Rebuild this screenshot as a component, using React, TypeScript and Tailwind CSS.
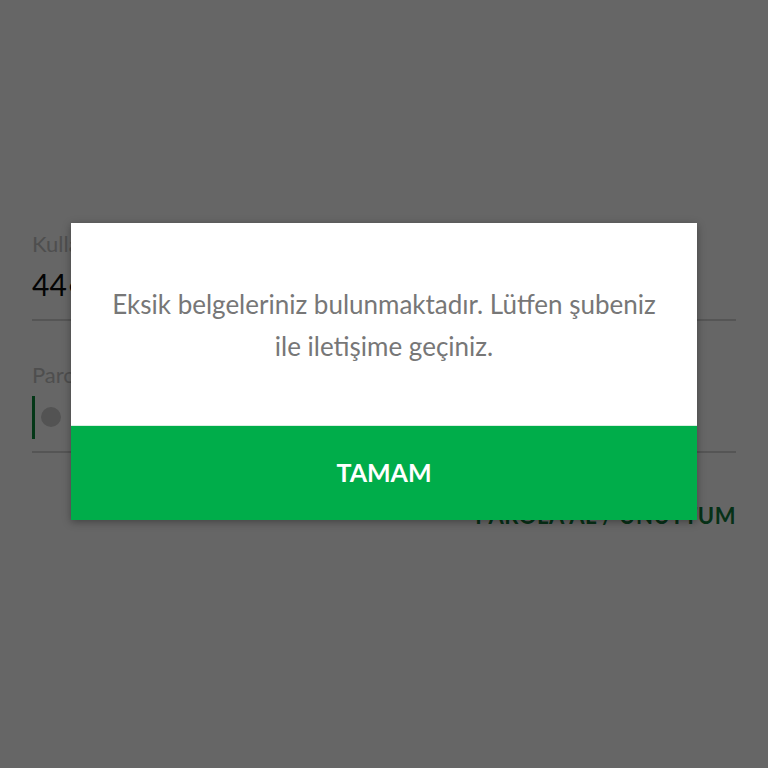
import React from 'react';

// Giriş ekranı + "eksik belge" uyarı penceresi

function LoginForm() {
  return (
    <div className="px-8 pt-[228px]">
      <div className="text-[22px] leading-[32px] text-[#c4c4c4]">Kullanıcı Adı</div>
      <div className="mt-[6px] text-[30px] leading-[36px] text-[#0a0a0a]">44•••••••••</div>
      <div className="mt-[17px] h-[2px] bg-[#d4d4d4]" />

      <div className="mt-[38px] text-[22px] leading-[32px] text-[#c4c4c4]">Parola</div>
      <div className="mt-[4px] flex h-[44px] items-center">
        <div className="h-[43px] w-[3px] bg-[#0a8a3a]" />
        <div className="ml-[6px] h-[20px] w-[20px] rounded-full bg-[#cfcfcf]" />
      </div>
      <div className="mt-[12px] h-[2px] bg-[#d4d4d4]" />

      <div className="mt-[46px] flex justify-end">
        <span className="text-[22px] font-bold tracking-wide text-[#0f7a3a]">PAROLA AL / UNUTTUM</span>
      </div>
    </div>
  );
}

function AlertDialog() {
  return (
    <div className="absolute inset-0 flex items-start justify-center bg-black/60 pt-[223px]">
      <div className="w-[626px] bg-white shadow-[0_2px_8px_rgba(0,0,0,0.35)]">
        <div className="flex h-[202px] items-start justify-center px-9 pt-[60px]">
          <p className="text-center text-[26px] leading-[42px] text-[#777777]">
            Eksik belgeleriniz bulunmaktadır. Lütfen şubeniz
            <br />
            ile iletişime geçiniz.
          </p>
        </div>
        <button className="flex h-[95px] w-full items-center justify-center border-t border-[#d9efe2] bg-[#00ad4a]">
          <span className="text-[25px] font-bold text-white">TAMAM</span>
        </button>
      </div>
    </div>
  );
}

export default function App() {
  return (
    <div
      className="relative h-[768px] w-[768px] overflow-hidden bg-white"
      style={{ fontFamily: 'Lato, "Noto Sans", sans-serif' }}
    >
      <LoginForm />
      <AlertDialog />
    </div>
  );
}
